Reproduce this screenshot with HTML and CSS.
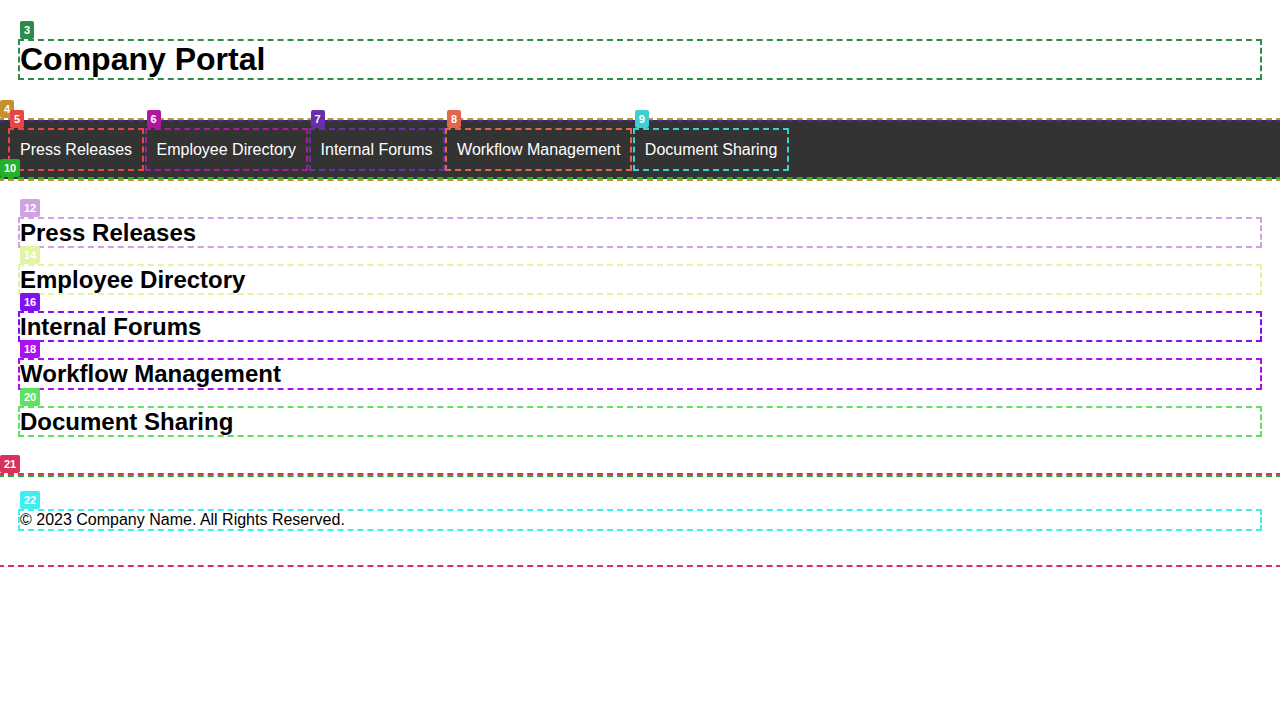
FILE: index.html
```html
<!DOCTYPE html>
<html lang="en">
<head>
<meta charset="utf-8">
<title>Company Portal</title>
<link rel="stylesheet" href="styles.css">
</head>
<body class="page dbg c1">
<header class="site-header dbg c2">
  <h1 class="title dbg c3" data-n="3">Company Portal</h1>
</header>
<nav class="site-nav dbg c4" data-n="4"><a href="#press" class="nav-link dbg c5" data-n="5">Press Releases</a> <a href="#directory" class="nav-link dbg c6" data-n="6">Employee Directory</a> <a href="#forums" class="nav-link dbg c7" data-n="7">Internal Forums</a> <a href="#workflow" class="nav-link dbg c8" data-n="8">Workflow Management</a> <a href="#docs" class="nav-link dbg c9" data-n="9">Document Sharing</a></nav>
<main class="site-main dbg c10" data-n="10">
  <section id="press" class="section"><h2 class="section-title dbg c12" data-n="12">Press Releases</h2></section>
  <section id="directory" class="section"><h2 class="section-title dbg c14" data-n="14">Employee Directory</h2></section>
  <section id="forums" class="section"><h2 class="section-title dbg c16" data-n="16">Internal Forums</h2></section>
  <section id="workflow" class="section"><h2 class="section-title dbg c18" data-n="18">Workflow Management</h2></section>
  <section id="docs" class="section"><h2 class="section-title dbg c20" data-n="20">Document Sharing</h2></section>
</main>
<footer class="site-footer dbg c21" data-n="21">
  <p class="copyright dbg c22" data-n="22">© 2023 Company Name. All Rights Reserved.</p>
</footer>
</body>
</html>
```
FILE: styles.css
```css
html, body {
  margin: 0;
  padding: 0;
  background: #ffffff;
  color: #000000;
  font-family: "Liberation Sans", Arial, sans-serif;
}

.site-header {
  position: relative;
  z-index: 1;
  padding: 20px;
}

.title {
  font-size: 32px;
  font-weight: bold;
  margin: 21.44px 0;
}

.site-nav {
  background: #333333;
  padding: 10px;
}

.nav-link {
  display: inline-block;
  color: #ffffff;
  text-decoration: none;
  padding: 10px;
  font-size: 16px;
  line-height: 19px;
}

.site-main {
  padding: 20px;
}

.section-title {
  font-size: 24px;
  line-height: 27.3px;
  font-weight: bold;
  margin: 19.92px 0;
}

.site-footer {
  padding: 20px;
}

.copyright {
  margin: 16px 0;
  font-size: 16px;
}

/* debug overlay: dashed outlines + numbered badges */
.dbg {
  outline: 2px dashed var(--dc);
}

.dbg[data-n] {
  position: relative;
}

.dbg[data-n]::before {
  content: attr(data-n);
  position: absolute;
  z-index: 2;
  left: 0;
  top: -20px;
  height: 18px;
  padding: 0 4px;
  box-sizing: border-box;
  background: var(--dc);
  color: #ffffff;
  font: bold 11px/18px "Liberation Sans", Arial, sans-serif;
  border-radius: 2px;
  white-space: nowrap;
}

.c1 { --dc: #d8325a; }
.c2 { --dc: #3a2fa3; }
.c3 { --dc: #2e8b4a; }
.c4 { --dc: #c4922c; }
.c5 { --dc: #e84545; }
.c6 { --dc: #b0179f; }
.c7 { --dc: #6a2fa8; }
.c8 { --dc: #e0664c; }
.c9 { --dc: #40cfcf; }
.c10 { --dc: #22b32b; }
.c12 { --dc: #cda4e0; }
.c14 { --dc: #e2f5a0; }
.c16 { --dc: #7f10f0; }
.c18 { --dc: #ad10f0; }
.c20 { --dc: #60e060; }
.c21 { --dc: #d8325a; }
.c22 { --dc: #40eeee; }
```
